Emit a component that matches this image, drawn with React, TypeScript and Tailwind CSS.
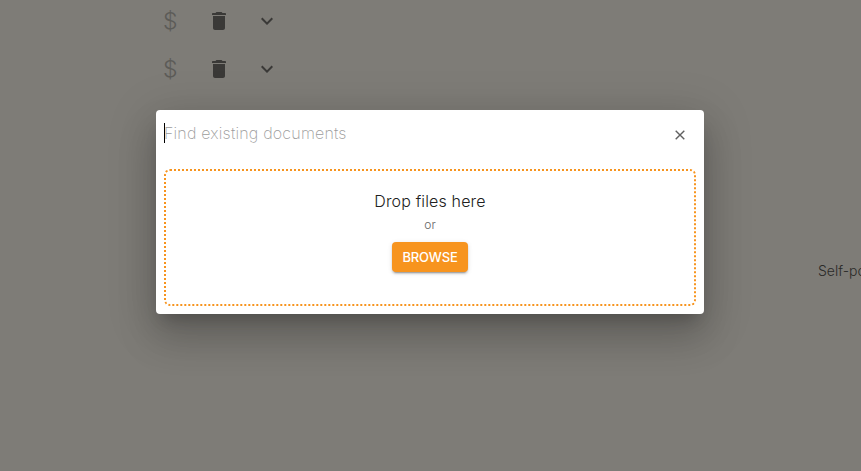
const rows = [0, 1];

function TrashIcon() {
  return (
    <svg viewBox="0 0 24 24" className="size-6" fill="currentColor" aria-hidden="true">
      <path d="M6 19c0 1.1.9 2 2 2h8c1.1 0 2-.9 2-2V7H6zM18 4h-2.5l-.71-.71c-.18-.18-.44-.29-.7-.29H9.91c-.26 0-.52.11-.7.29L8.500 4H6c-.55 0-1 .45-1 1v1h14V5c0-.55-.45-1-1-1" />
    </svg>
  );
}

function ExpandIcon() {
  return (
    <svg viewBox="0 0 24 24" className="size-6" fill="currentColor" aria-hidden="true">
      <path d="M16.59 8.590 12 13.170 7.410 8.590 6 10l6 6 6-6z" />
    </svg>
  );
}

function CloseIcon() {
  return (
    <svg viewBox="0 0 10 10" className="size-[10px]" fill="none" stroke="currentColor" strokeWidth="1.4" aria-hidden="true">
      <path d="M.7.7 9.300 9.300M9.300.7.7 9.300" />
    </svg>
  );
}

function UploadDialog() {
  return (
    <section
      role="dialog"
      className="flex h-[204px] w-[548px] flex-col rounded bg-white px-2 pb-2 shadow-[0_11px_15px_-7px_rgba(0,0,0,0.2),0_24px_38px_3px_rgba(0,0,0,0.14),0_9px_46px_8px_rgba(0,0,0,0.12)]"
    >
      <header className="flex h-[59px] shrink-0 items-start justify-between pt-[13px] pr-[11px]">
        <div className="flex h-5 items-center border-l border-black text-[16px] leading-5 font-extralight tracking-[0.2px] text-[#9c9c9c]">
          <span className="-ml-px">Find existing documents</span>
        </div>
        <button className="mt-[7px] text-[#606060]" aria-label="Close">
          <CloseIcon />
        </button>
      </header>
      <div className="flex h-[137px] flex-col items-center rounded-md border-2 border-dotted border-[#f7941e] pt-[18px]">
        <p className="text-[16px] leading-6 font-light tracking-[0.15px] text-[#212121]">Drop files here</p>
        <p className="mt-[3px] text-[12px] leading-[18px] font-light tracking-[0.1px] text-[#666]">or</p>
        <button className="mt-[8px] h-[30px] w-[76px] rounded bg-[#f7941e] text-[13px] leading-[30px] font-medium tracking-[-0.15px] text-white shadow-[0_3px_1px_-2px_rgba(0,0,0,0.2),0_2px_2px_0_rgba(0,0,0,0.14),0_1px_5px_0_rgba(0,0,0,0.12)]">
          BROWSE
        </button>
      </div>
    </section>
  );
}

export default function App() {
  return (
    <div className="relative h-[471px] w-[861px] overflow-hidden bg-[#7e7c77] font-['Inter','Liberation_Sans',sans-serif]">
      <div className="flex h-[259px] flex-col pt-[9px] pl-[158px]">
        {rows.map((row) => (
          <div key={row} className="flex h-12 items-start text-[#3a3937]">
            <span className="w-[49px] pl-[5px] text-[23px] leading-[25px] font-light text-[#5c5b57]">$</span>
            <span className="w-12"><TrashIcon /></span>
            <ExpandIcon />
          </div>
        ))}
      </div>
      <div className="flex h-6 justify-end overflow-hidden">
        <p className="w-[43px] text-[14px] leading-6 font-light whitespace-nowrap text-[#2b2a28]">Self-po</p>
      </div>
      <div className="absolute top-[110px] left-[156px]">
        <UploadDialog />
      </div>
    </div>
  );
}
